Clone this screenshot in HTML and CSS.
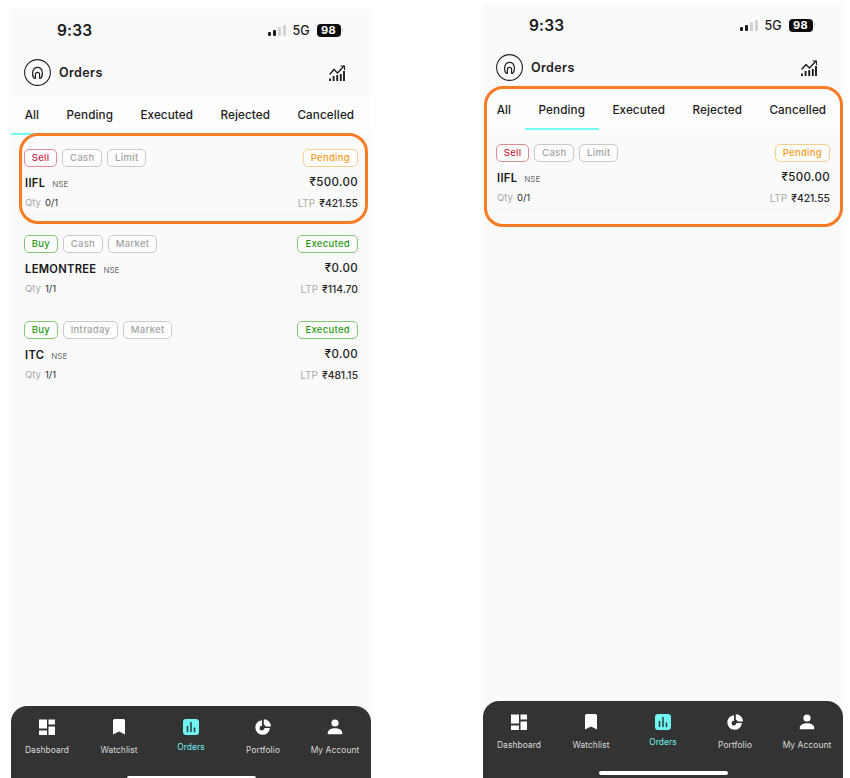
FILE: index.html
```html
<!DOCTYPE html>
<html lang="en">
<head>
<meta charset="utf-8">
<title>Orders</title>
<link rel="stylesheet" href="styles.css">
</head>
<body>
<svg class="defs" width="0" height="0" aria-hidden="true">
  <symbol id="i-logo" viewBox="0 0 27 27">
    <circle cx="13.5" cy="13.5" r="12.9" fill="none" stroke="#222" stroke-width="1.1"/>
    <path d="M10.3 19.3C7.6 16.6 7.8 8.3 13.5 8.3S19.4 16.6 16.7 19.3H15.6V15.3C15.6 12.6 11.4 12.6 11.4 15.3V19.3Z" fill="none" stroke="#222" stroke-width="1.2" stroke-linejoin="round"/>
  </symbol>
  <symbol id="i-chart" viewBox="0 0 16 16">
    <path d="M1 16v-2.500M4.600 16v-5M8.200 16v-6M11.800 16v-7M15 16v-10" fill="none" stroke="#1c1c1c" stroke-width="1.900"/>
    <path d="M.6 9.500 5 4.500l3.500 3.500L15 1" fill="none" stroke="#1c1c1c" stroke-width="1.400"/>
    <path d="M11.500 1H15.500V5" fill="none" stroke="#1c1c1c" stroke-width="1.100"/>
  </symbol>
  <symbol id="i-dash" viewBox="0 0 16 16">
    <path d="M0 .5h8v9H0zM0 11.500h8V16H0zM9.500 .5H16v5H9.500zM9.500 7.500H16V16H9.500z" fill="#fff"/>
  </symbol>
  <symbol id="i-mark" viewBox="0 0 12 16">
    <path d="M0 1.500A1.500 1.500 0 0 1 1.500 0h9A1.500 1.500 0 0 1 12 1.500V15.500L6 12.500 0 15.500Z" fill="#fff"/>
  </symbol>
  <symbol id="i-orders" viewBox="0 0 16 16">
    <rect width="16" height="16" rx="3" fill="#6ff5f2"/>
    <path d="M4.500 7.500v5M8 3.500v9M11.500 9v3.500" stroke="#2b3b3c" stroke-width="1.500" stroke-linecap="round"/>
  </symbol>
  <symbol id="i-pie" viewBox="0 0 16 16">
    <path d="M7 1.200a7.300 7.300 0 1 0 7.900 7.900H9.300A2.400 2.400 0 1 1 7 6.800Z" fill="#fff"/>
    <path d="M8.800 .2a7.300 7.300 0 0 1 7.100 7.200H10.600A2.400 2.400 0 0 0 8.800 5.500Z" fill="#fff"/>
  </symbol>
  <symbol id="i-user" viewBox="0 0 16 16">
    <circle cx="8" cy="4" r="3.600" fill="#fff"/>
    <path d="M.8 15.200v-1.700C.8 10.600 5 9.200 8 9.200s7.200 1.400 7.200 4.300v1.700Z" fill="#fff"/>
  </symbol>
</svg>

<main class="stage">
  <section class="phone phone-all">
    <div class="status">
      <span class="time">9:33</span>
      <div class="status-right">
        <span class="signal"><i class="on b1"></i><i class="on b2"></i><i class="b3"></i><i class="b4"></i></span>
        <span class="net">5G</span>
        <span class="battery">98</span><span class="nub"></span>
      </div>
    </div>
    <header class="head">
      <svg class="logo"><use href="#i-logo"/></svg>
      <h1 class="title">Orders</h1>
      <svg class="chart"><use href="#i-chart"/></svg>
    </header>
    <nav class="tabs">
      <span class="tab active">All</span><span class="tab">Pending</span><span class="tab">Executed</span><span class="tab">Rejected</span><span class="tab">Cancelled</span>
    </nav>
    <div class="list">
      <article class="order">
        <div class="row tags-row">
          <div class="tags"><span class="tag sell">Sell</span><span class="tag">Cash</span><span class="tag">Limit</span></div>
          <span class="tag pending">Pending</span>
        </div>
        <div class="row name-row"><div><span class="name">IIFL</span><span class="exch">NSE</span></div><span class="price">₹500.00</span></div>
        <div class="row qty-row"><div><span class="muted">Qty</span><span class="val">0/1</span></div><div><span class="muted ltp-label">LTP</span><span class="val ltp">₹421.55</span></div></div>
      </article>
      <article class="order">
        <div class="row tags-row">
          <div class="tags"><span class="tag buy">Buy</span><span class="tag">Cash</span><span class="tag">Market</span></div>
          <span class="tag executed">Executed</span>
        </div>
        <div class="row name-row"><div><span class="name">LEMONTREE</span><span class="exch">NSE</span></div><span class="price">₹0.00</span></div>
        <div class="row qty-row"><div><span class="muted">Qty</span><span class="val">1/1</span></div><div><span class="muted ltp-label">LTP</span><span class="val ltp">₹114.70</span></div></div>
      </article>
      <article class="order">
        <div class="row tags-row">
          <div class="tags"><span class="tag buy">Buy</span><span class="tag">Intraday</span><span class="tag">Market</span></div>
          <span class="tag executed">Executed</span>
        </div>
        <div class="row name-row"><div><span class="name">ITC</span><span class="exch">NSE</span></div><span class="price">₹0.00</span></div>
        <div class="row qty-row"><div><span class="muted">Qty</span><span class="val">1/1</span></div><div><span class="muted ltp-label">LTP</span><span class="val ltp">₹481.15</span></div></div>
      </article>
    </div>
    <footer class="bottom">
      <div class="nav">
        <a class="nav-item"><svg class="nav-icon"><use href="#i-dash"/></svg><span>Dashboard</span></a>
        <a class="nav-item"><svg class="nav-icon"><use href="#i-mark"/></svg><span>Watchlist</span></a>
        <a class="nav-item current"><svg class="nav-icon"><use href="#i-orders"/></svg><span>Orders</span></a>
        <a class="nav-item"><svg class="nav-icon"><use href="#i-pie"/></svg><span>Portfolio</span></a>
        <a class="nav-item"><svg class="nav-icon"><use href="#i-user"/></svg><span>My Account</span></a>
      </div>
      <div class="home-bar"></div>
    </footer>
    <div class="callout callout-all"></div>
  </section>

  <section class="phone phone-pending">
    <div class="status">
      <span class="time">9:33</span>
      <div class="status-right">
        <span class="signal"><i class="on b1"></i><i class="on b2"></i><i class="b3"></i><i class="b4"></i></span>
        <span class="net">5G</span>
        <span class="battery">98</span><span class="nub"></span>
      </div>
    </div>
    <header class="head">
      <svg class="logo"><use href="#i-logo"/></svg>
      <h1 class="title">Orders</h1>
      <svg class="chart"><use href="#i-chart"/></svg>
    </header>
    <nav class="tabs">
      <span class="tab">All</span><span class="tab active">Pending</span><span class="tab">Executed</span><span class="tab">Rejected</span><span class="tab">Cancelled</span>
    </nav>
    <div class="list">
      <article class="order">
        <div class="row tags-row">
          <div class="tags"><span class="tag sell">Sell</span><span class="tag">Cash</span><span class="tag">Limit</span></div>
          <span class="tag pending">Pending</span>
        </div>
        <div class="row name-row"><div><span class="name">IIFL</span><span class="exch">NSE</span></div><span class="price">₹500.00</span></div>
        <div class="row qty-row"><div><span class="muted">Qty</span><span class="val">0/1</span></div><div><span class="muted ltp-label">LTP</span><span class="val ltp">₹421.55</span></div></div>
      </article>
    </div>
    <footer class="bottom">
      <div class="nav">
        <a class="nav-item"><svg class="nav-icon"><use href="#i-dash"/></svg><span>Dashboard</span></a>
        <a class="nav-item"><svg class="nav-icon"><use href="#i-mark"/></svg><span>Watchlist</span></a>
        <a class="nav-item current"><svg class="nav-icon"><use href="#i-orders"/></svg><span>Orders</span></a>
        <a class="nav-item"><svg class="nav-icon"><use href="#i-pie"/></svg><span>Portfolio</span></a>
        <a class="nav-item"><svg class="nav-icon"><use href="#i-user"/></svg><span>My Account</span></a>
      </div>
      <div class="home-bar"></div>
    </footer>
    <div class="callout callout-pending"></div>
  </section>
</main>
</body>
</html>
```

FILE: styles.css
```css
* { box-sizing: border-box; }
html, body { margin: 0; height: 778px; overflow: hidden; background: #fff; }
body { font-family: Inter, "Liberation Sans", sans-serif; color: #1c1c1c; }
.defs { position: absolute; }

.stage { display: flex; gap: 112px; padding-left: 11px; align-items: flex-start; height: 778px; }
.phone { position: relative; width: 360px; height: 774px; flex: none; display: flex; flex-direction: column; background: #fafafa; }
.phone-all { margin-top: 9px; }
.phone-pending { margin-top: 4px; }

.status { height: 42px; display: flex; align-items: center; justify-content: space-between; padding-left: 46px; padding-right: 28px; }
.time { font-size: 15.5px; font-weight: 600; color: #1a1a1a; letter-spacing: .2px; }
.status-right { display: flex; align-items: center; }
.signal { display: flex; align-items: flex-end; gap: 1.500px; height: 11px; margin-right: 6px; }
.signal i { display: block; width: 3.500px; background: #d2d2d2; border-radius: 1px; }
.signal .on { background: #1a1a1a; }
.b1 { height: 4px; }
.b2 { height: 6px; }
.b3 { height: 9px; }
.b4 { height: 11px; }
.net { font-size: 12.500px; font-weight: 500; color: #1a1a1a; margin-right: 7px; }
.battery { width: 24px; height: 13px; border-radius: 4px; background: #0c0c0c; color: #fff; font-size: 11px; font-weight: 700; line-height: 13px; text-align: center; letter-spacing: .3px; }
.nub { width: 1.500px; height: 4px; margin-left: 1px; background: #c8c8c8; border-radius: 0 1px 1px 0; }

.head { height: 45px; display: flex; align-items: center; padding: 0 26px 3px 13px; }
.logo { width: 27px; height: 27px; flex: none; }
.title { margin: 0 0 0 8px; font-size: 12.500px; font-weight: 600; color: #1c1c1c; letter-spacing: .4px; flex: 1; }
.chart { width: 16px; height: 16px; flex: none; margin-top: 1px; }

.tabs { display: flex; height: 39px; background: #fdfdfd; flex: none; }
.tab { height: 39px; line-height: 39px; padding: 0 13.700px; font-size: 11.700px; font-weight: 500; color: #1c1c1c; letter-spacing: .1px; white-space: nowrap; border-bottom: 2px solid transparent; }
.tab.active { border-bottom-color: #70faf6; }

.list { flex: 1; padding: 14px 13px 0; }
.order { height: 66px; margin-bottom: 20px; border-bottom: 1px solid #f7f7f7; }
.row { display: flex; justify-content: space-between; align-items: center; }
.tags-row { height: 18px; }
.tags { display: flex; gap: 5px; }
.tag { height: 18px; line-height: 16px; padding: 0 6.800px; border: 1px solid #c9c9c9; border-radius: 5px; font-size: 9.500px; font-weight: 500; letter-spacing: .3px; color: #a3a3a3; background: #fdfdfd; white-space: nowrap; }
.tag.sell { color: #c8283f; border-color: #dc8a96; background: #fff; }
.tag.buy { color: #2a9a14; border-color: #82c874; background: #fff; }
.tag.pending { color: #f59a1c; border-color: #f7cf8e; background: #fff; padding: 0 7px; }
.tag.executed { color: #2a9a14; border-color: #82c874; background: #fff; padding: 0 7px; }

.name-row { margin-top: 4px; height: 20px; }
.name { font-size: 11.200px; font-weight: 600; letter-spacing: .3px; color: #161616; margin-left: 1px; }
.exch { margin-left: 7px; font-size: 8px; color: #6e6e6e; }
.price { font-size: 11.500px; font-weight: 500; letter-spacing: .35px; color: #1a1a1a; margin-top: 1px; }
.qty-row { height: 21px; margin-top: 1px; font-size: 9.500px; }
.qty-row > div:first-child { margin-left: 1px; }
.muted { color: #a8a8a8; margin-right: 4px; }
.ltp-label { font-size: 10px; }
.val { color: #2a2a2a; font-weight: 400; }
.val.ltp { font-size: 10.300px; font-weight: 500; }

.bottom { height: 77px; flex: none; background: #333; border-radius: 16px 16px 0 0; display: flex; flex-direction: column; }
.nav { display: grid; grid-template-columns: repeat(5, 72px); padding-top: 13px; }
.nav-item { display: flex; flex-direction: column; align-items: center; color: #dcdcdc; font-size: 8.400px; line-height: 11px; }
.nav-item span { margin-top: 9.500px; white-space: nowrap; letter-spacing: .1px; }
.nav-icon { width: 16px; height: 16px; flex: none; }
.nav-item.current { color: #6ff5f2; }
.nav-item.current span { margin-top: 7px; }
.home-bar { width: 129px; height: 4px; margin: 20px auto 0; background: #fff; border-radius: 2px; flex: none; }

.callout { position: absolute; border: 3px solid #f97c24; border-radius: 19px; pointer-events: none; }
.callout-all { left: 8px; top: 124px; width: 349px; height: 91px; }
.callout-pending { left: 1px; top: 82px; width: 359px; height: 141px; }
```
